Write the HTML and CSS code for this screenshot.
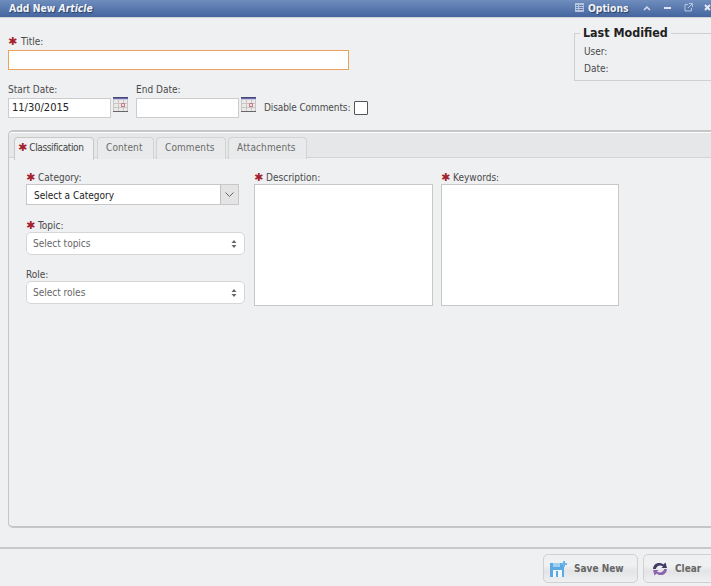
FILE: index.html
```html
<!DOCTYPE html>
<html lang="en">
<head>
<meta charset="utf-8">
<title>Add New Article</title>
<link rel="stylesheet" href="styles.css">
</head>
<body>
<div class="window">
  <header class="titlebar">
    <div class="title">Add New <em>Article</em></div>
    <div class="tools">
      <svg class="ic-options" width="9" height="9" viewBox="0 0 9 9"><path d="M0 0h9v9H0z" fill="#b9c6de"/><path d="M1 2h2v1H1zM4 2h4v1H4zM1 4h2v1H1zM4 4h4v1H4zM1 6h2v1H1zM4 6h4v1H4z" fill="#5c7cb0"/></svg>
      <span class="opt">Options</span>
      <svg class="ic-up" width="8" height="6" viewBox="0 0 8 6"><path d="M1 5l3-3 3 3" fill="none" stroke="#d6deec" stroke-width="1.6"/></svg>
      <span class="ic-min"></span>
      <svg class="ic-pop" width="9" height="9" viewBox="0 0 9 9"><path d="M4 1.500H1v6.500h6.500V5M5 .5h3.500V4M8.500.5L4 5" fill="none" stroke="#b9c8e2" stroke-width="1"/></svg>
      <svg class="ic-x" width="7" height="7" viewBox="0 0 7 7"><path d="M1 1l5 5M6 1L1 6" stroke="#e4e9f3" stroke-width="2"/></svg>
    </div>
  </header>

  <main class="form">
    <div class="top">
      <div class="top-left">
        <label class="lbl title-lbl"><span class="req">✱</span> Title:</label>
        <div class="title-input"></div>
        <div class="dates">
          <div class="date">
            <label class="lbl">Start Date:</label>
            <div class="date-row">
              <div class="date-input">11/30/2015</div>
              <svg class="cal" width="15" height="15" viewBox="0 0 15 15"><path d="M0 0h15v15H0z" fill="#ece9e9"/><path d="M0 .5h15" stroke="#45457a"/><path d="M0 1.500h15" stroke="#6a6aa8"/><path d="M0 2.500h15" stroke="#c4c4da"/><path d="M.5 3v11.500h14V3M5.500 3v11M10.500 3v11M1 6.500h13M1 10.500h13" stroke="#c6c6c6" fill="none"/><path d="M8 6h4v4H8z" fill="#cf7a8a"/><path d="M9 7h2v2H9z" fill="#f0dde0"/><path d="M0 14.500h15" stroke="#666"/></svg>
            </div>
          </div>
          <div class="date">
            <label class="lbl">End Date:</label>
            <div class="date-row">
              <div class="date-input"></div>
              <svg class="cal" width="15" height="15" viewBox="0 0 15 15"><path d="M0 0h15v15H0z" fill="#ece9e9"/><path d="M0 .5h15" stroke="#45457a"/><path d="M0 1.500h15" stroke="#6a6aa8"/><path d="M0 2.500h15" stroke="#c4c4da"/><path d="M.5 3v11.500h14V3M5.500 3v11M10.500 3v11M1 6.500h13M1 10.500h13" stroke="#c6c6c6" fill="none"/><path d="M8 6h4v4H8z" fill="#cf7a8a"/><path d="M9 7h2v2H9z" fill="#f0dde0"/><path d="M0 14.500h15" stroke="#666"/></svg>
            </div>
          </div>
          <div class="disable">
            <span class="lbl">Disable Comments:</span>
            <span class="check"></span>
          </div>
        </div>
      </div>
      <fieldset class="modified">
        <legend>Last Modified</legend>
        <div class="lbl">User:</div>
        <div class="lbl">Date:</div>
      </fieldset>
    </div>

    <section class="tabs-panel">
      <nav class="tabbar">
        <div class="tab active"><span class="req">✱</span> Classification</div>
        <div class="tab">Content</div>
        <div class="tab">Comments</div>
        <div class="tab">Attachments</div>
      </nav>
      <div class="tab-body">
        <div class="col-selects">
          <div class="field">
            <label class="lbl"><span class="req">✱</span> Category:</label>
            <div class="combo">
              <span>Select a Category</span>
              <span class="combo-btn"><svg width="9" height="5" viewBox="0 0 9 5"><path d="M.5.500l4 4 4-4" fill="none" stroke="#666"/></svg></span>
            </div>
          </div>
          <div class="field">
            <label class="lbl"><span class="req">✱</span> Topic:</label>
            <div class="pick"><span>Select topics</span><svg width="6" height="8" viewBox="0 0 6 8"><path d="M3 0l2.500 3H.5zM3 8L.5 5h5z" fill="#666"/></svg></div>
          </div>
          <div class="field">
            <label class="lbl">Role:</label>
            <div class="pick"><span>Select roles</span><svg width="6" height="8" viewBox="0 0 6 8"><path d="M3 0l2.500 3H.5zM3 8L.5 5h5z" fill="#666"/></svg></div>
          </div>
        </div>
        <div class="area-field">
          <label class="lbl"><span class="req">✱</span> Description:</label>
          <div class="area"></div>
        </div>
        <div class="area-field">
          <label class="lbl"><span class="req">✱</span> Keywords:</label>
          <div class="area"></div>
        </div>
      </div>
    </section>
  </main>

  <footer class="footer">
    <div class="btn save">
      <svg width="17" height="16" viewBox="0 0 17 16"><path d="M0 2h12l2 2v12H0z" fill="#5ba9e2"/><path d="M3 2h7v4H3z" fill="#9fd0f2"/><path d="M3 9h9v7H3z" fill="#f1f8fd"/><path d="M6 10h2v6H6z" fill="#5ba9e2"/><path d="M13 0h2v2h2v2h-2v2h-2V4h-2V2h2z" fill="#6fb6e8"/></svg>
      <span>Save New</span>
    </div>
    <div class="btn clear">
      <svg width="16" height="16" viewBox="0 0 16 16"><path d="M1 8c.4-4 3-6 6-6 2 0 3.300.5 4.300 1.500L13.500 1.500 15 7H9.500l1.500-1.700C10 4.700 9 4.500 8 4.500 6 4.500 4.500 6 3.800 8z" fill="#3f3a63"/><path d="M15 8c-.4 4-3 6-6 6-2 0-3.300-.5-4.300-1.500L2.500 14.500 1 9h5.500L5 10.700c1 .6 2 .8 3 .8 2 0 3.500-1.500 4.200-3.500z" fill="#8b64ad"/></svg>
      <span>Clear</span>
    </div>
  </footer>
</div>
</body>
</html>
```
FILE: styles.css
```css
* { box-sizing: border-box; }
html, body { margin: 0; padding: 0; height: 100%; }
body {
  background: #eff0f2;
  font-family: "DejaVu Sans Condensed", "DejaVu Sans", Verdana, sans-serif;
  font-stretch: condensed;
  font-size: 10px;
  color: #444;
  overflow: hidden;
}
.window { width: 711px; height: 586px; display: flex; flex-direction: column; overflow: hidden; }

.titlebar {
  height: 18px;
  flex: none;
  display: flex;
  justify-content: space-between;
  align-items: center;
  padding: 0 0 2px 9px;
  background: linear-gradient(#6f8dbd, #44659f);
  border-bottom: 1px solid #d2d4d8;
  color: #f1f4f9;
  font-weight: bold;
  font-size: 10.300px;
  text-shadow: 1px 1px 1px #2b3f66;
}
.title em { font-style: italic; font-weight: bold; }
.tools { display: flex; align-items: center; width: 136px; flex: none; }
.opt { margin-left: 4px; width: 56px; }
.ic-up { margin-left: 0; }
.ic-min { display: block; width: 7px; height: 2px; background: #dfe5f0; margin-left: 13px; }
.ic-pop { margin-left: 13px; }
.ic-x { margin-left: 11px; }

.form { flex: none; height: 529px; padding: 0 0 0 8px; display: flex; flex-direction: column; }
.top { display: flex; height: 112px; }
.top-left { width: 566px; flex: none; padding-top: 18px; }
.lbl { display: block; line-height: 12px; color: #4a4a4a; white-space: nowrap; }
.req { font-family: "DejaVu Sans", sans-serif; font-stretch: normal; color: #a3232d; font-size: 11px; font-weight: bold; line-height: 10px; }
.title-lbl { word-spacing: 1px; }
.title-input {
  width: 341px; height: 20px; margin-top: 2px;
  background: #fff; border: 1px solid #e8a25c;
}
.dates { display: flex; margin-top: 14px; }
.date { width: 128px; flex: none; }
.date-row { display: flex; align-items: flex-start; margin-top: 2px; gap: 2px; }
.date-input {
  width: 103px; height: 20px; padding: 0 3px; line-height: 18px;
  background: #fff; border: 1px solid #ccc; color: #222; font-size: 11px;
}
.date-row .cal { display: block; margin-top: -1px; }
.disable { display: flex; align-items: center; gap: 4px; margin-top: 14px; letter-spacing: -.1px; }
.check { display: block; width: 14px; height: 14px; background: #fff; border: 1px solid #555; border-radius: 1px; }

.modified {
  flex: 1;
  margin: 8px -10px 0 0;
  padding: 5px 0 0 9px;
  height: 55px;
  border: 1px solid #d0d0d0;
  border-width: 1px 0 1px 1px;
}
.modified legend { font-size: 12.400px; font-weight: bold; color: #222; padding: 0 3px; margin-left: -4px; line-height: 14px; }
.modified .lbl { height: 17px; line-height: 13px; }

.tabs-panel {
  flex: none;
  height: 398px;
  margin-right: -10px;
  border: 1px solid #c6c6c6;
  border-width: 2px 1px 2px 1px;
  border-radius: 5px;
  display: flex;
  flex-direction: column;
}
.tabbar {
  flex: none;
  height: 26px;
  display: flex;
  gap: 2px;
  padding: 4px 0 0 5px;
  border-top: 1px solid #fff;
  border-bottom: 1px solid #d4d4d4;
  background: #e6e7e9;
  border-radius: 4px 0 0 0;
}
.tab {
  height: 22px; padding: 0 10px 0 8.500px; line-height: 20px; letter-spacing: .1px;
  background: #e9eaec; border: 1px solid #d4d4d4; border-bottom: 0;
  border-radius: 4px 4px 0 0; color: #6a6a6a;
}
.tab.active { background: #eff0f2; height: 23px; color: #444; padding: 0 9px 0 3px; border-color: #c8c8c8; margin-right: 1px; letter-spacing: -.38px; }
.tab-body { flex: 1; display: flex; padding: 14px 0 0 17px; }
.col-selects { width: 228px; flex: none; }
.field { height: 49px; }
.field:first-child { height: 48px; }
.combo {
  width: 213px; height: 21px; background: #fff; border: 1px solid #c8c8c8;
  display: flex; justify-content: space-between; align-items: center; padding-left: 7px; color: #222;
}
.combo > span:first-child { padding-top: 1px; }
.combo-btn { width: 18px; height: 19px; background: #e4e4e4; border-left: 1px solid #c0c0c0; display: flex; align-items: center; justify-content: center; }
.pick {
  margin-top: 0;
  width: 219px; height: 23px; background: #fff; border: 1px solid #d6d6d6; border-radius: 5px;
  display: flex; justify-content: space-between; align-items: center; padding: 0 7px 0 6px; color: #666;
}
.area-field { width: 187px; flex: none; }
.area { width: 179px; height: 122px; background: #fff; border: 1px solid #c8c8c8; }
.area-field:last-child .area { width: 178px; }

.footer {
  flex: none;
  height: 39px;
  border-top: 2px solid #c9c9c9;
  display: flex;
  justify-content: flex-start;
  gap: 5px;
  padding: 5px 0 0 543px;
}
.btn {
  flex: none; height: 29px; display: flex; align-items: center;
  border: 1px solid #d0d0d0; border-radius: 5px;
  background: linear-gradient(#eff0f2 40%, #e3e4e6 60%, #eff0f2);
  font-weight: bold; color: #666; font-size: 10px;
}
.save { width: 95px; gap: 7px; padding-left: 6px; }
.clear { width: 90px; gap: 7px; padding-left: 8px; }
```
